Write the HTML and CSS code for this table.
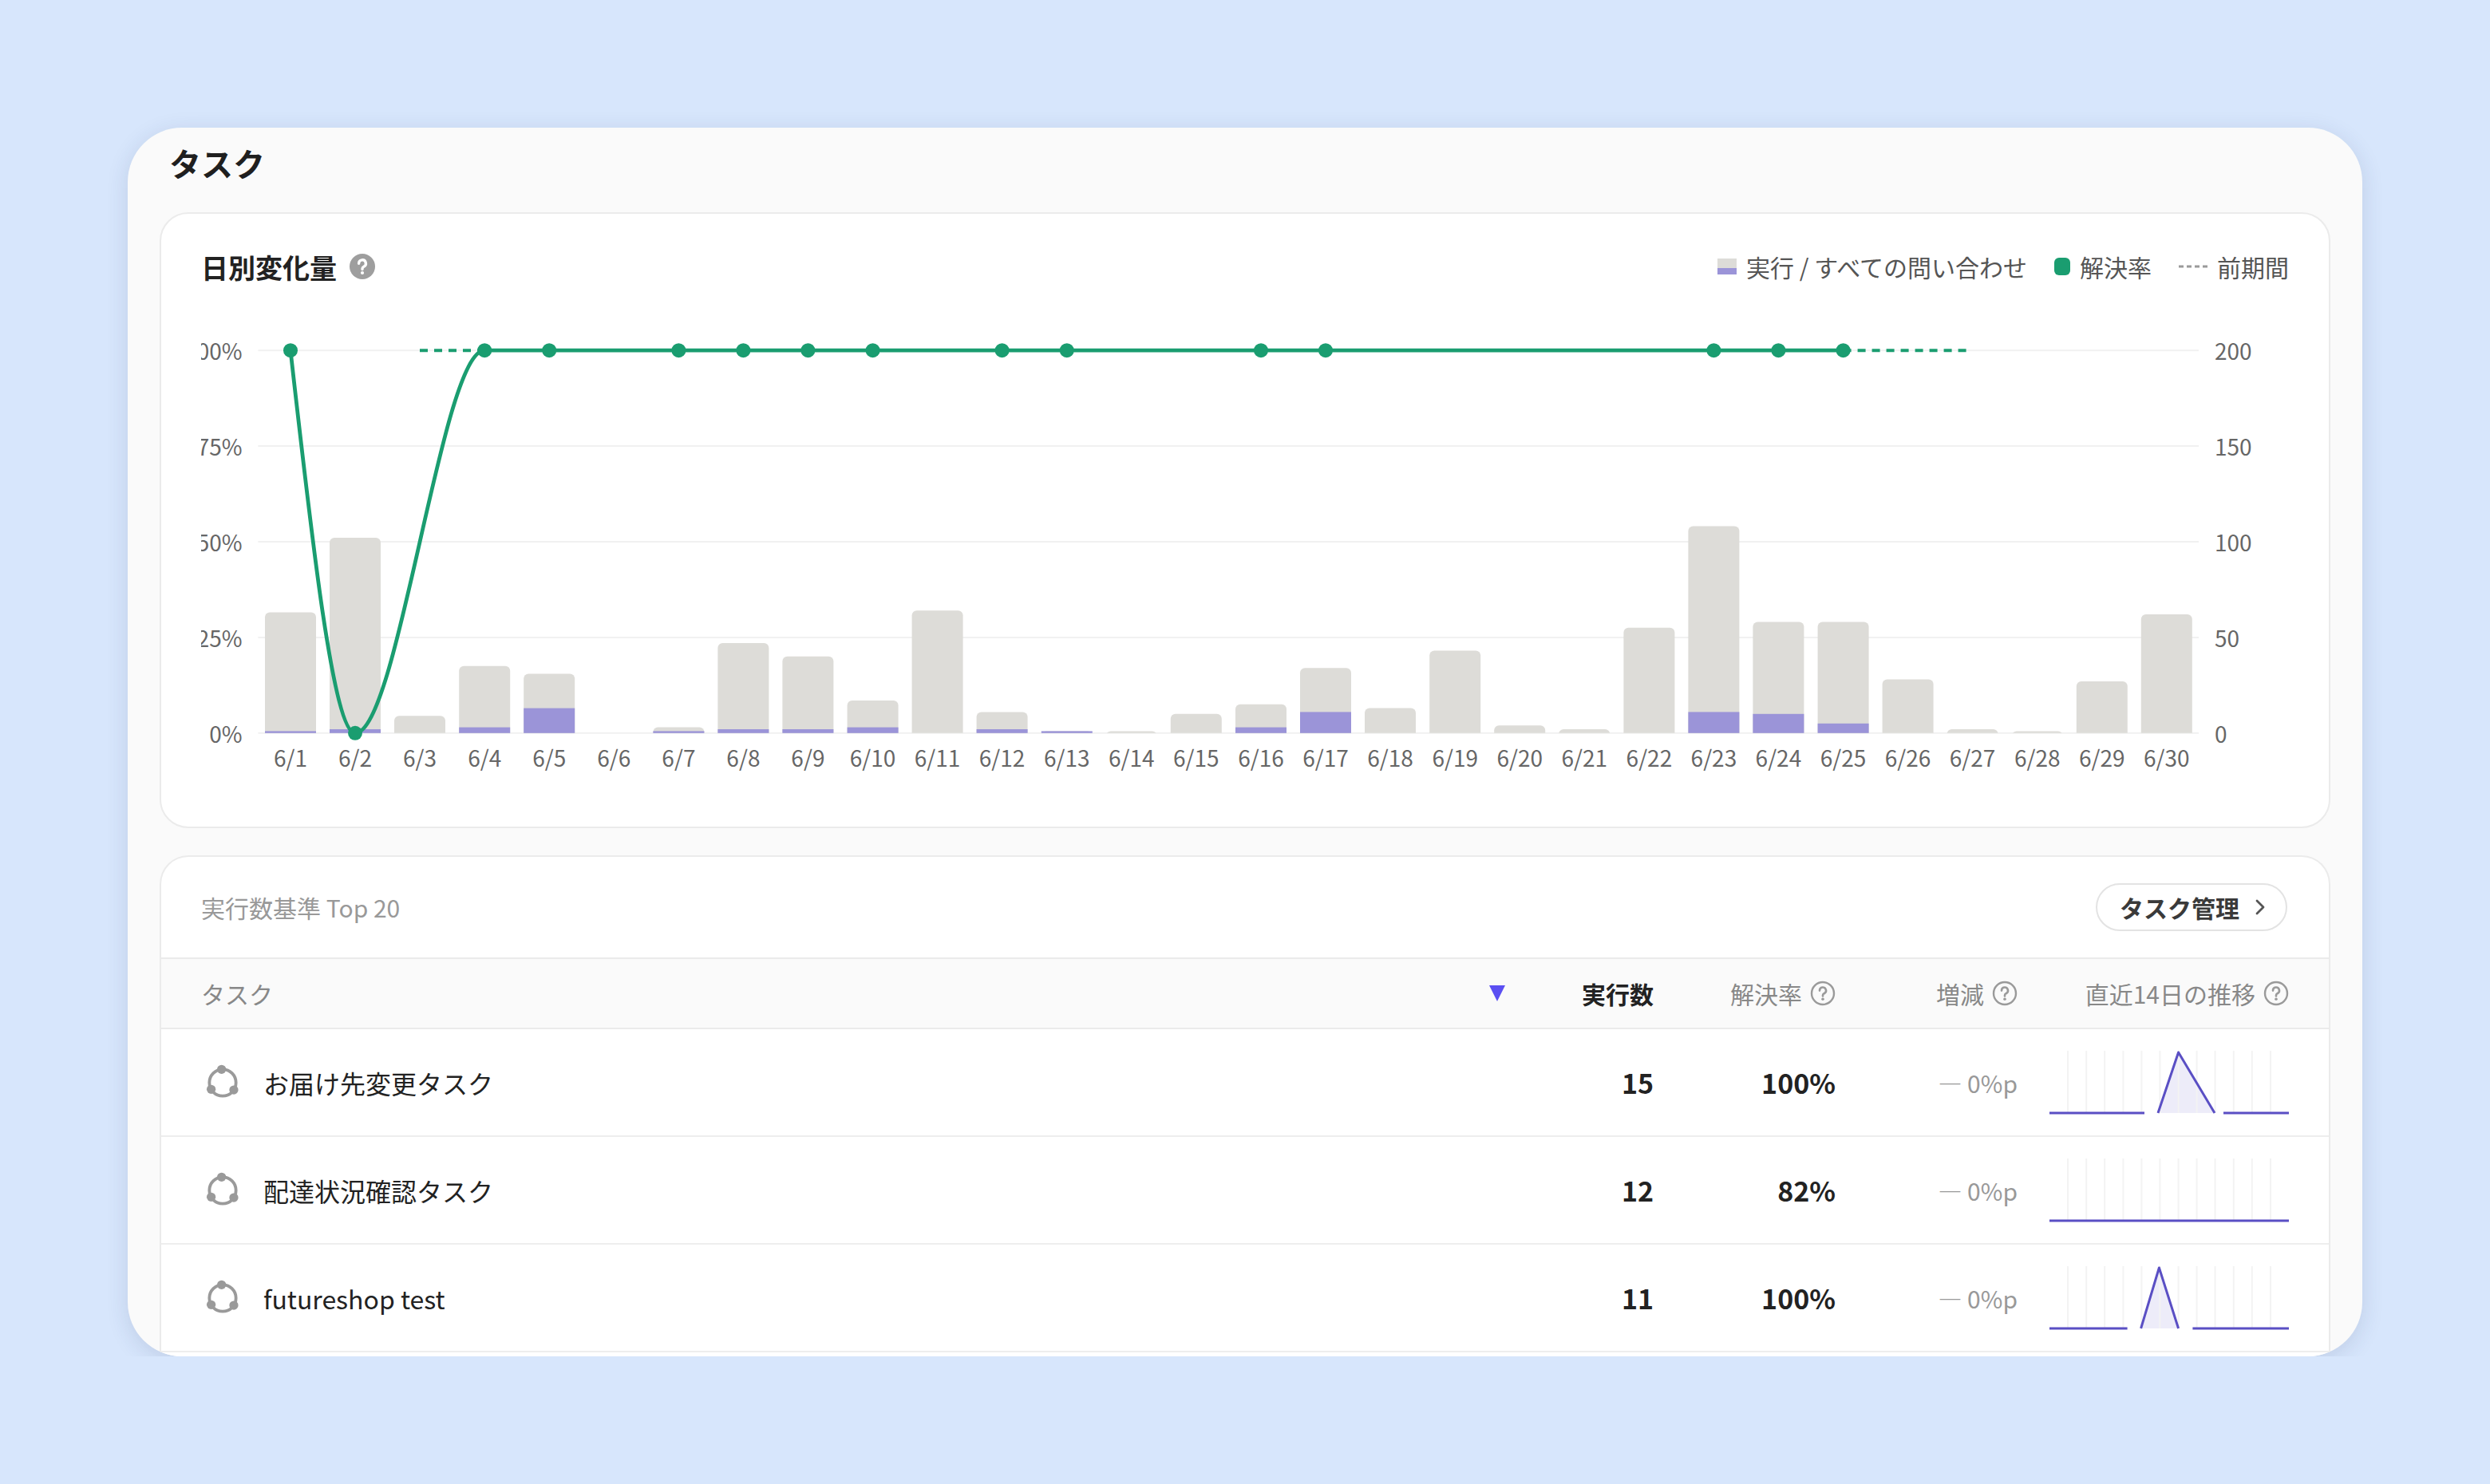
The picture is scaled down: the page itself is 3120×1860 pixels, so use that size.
FILE: index.html
```html
<!DOCTYPE html>
<html lang="ja">
<head>
<meta charset="utf-8">
<title>タスク</title>
<link rel="stylesheet" href="styles.css">
</head>
<body>
<div class="frame">
  <div class="panel">
    <h1 class="panel-title">タスク</h1>

    <section class="card chart-card">
      <div class="chart-head">
        <div class="chart-title">日別変化量
          <svg class="help-fill" viewBox="0 0 16 16" width="16" height="16"><circle cx="8" cy="8" r="8" fill="#9e9e9e"/><path d="M5.8 6.1a2.2 2.2 0 1 1 3.1 2c-.6.3-.9.7-.9 1.3v.4" stroke="#fff" stroke-width="1.7" fill="none" stroke-linecap="round"/><circle cx="8" cy="12" r="1.05" fill="#fff"/></svg>
        </div>
        <div class="legend">
          <span class="lg-item"><span class="lg-bar"></span>実行 / すべての問い合わせ</span>
          <span class="lg-item"><span class="lg-dot"></span>解決率</span>
          <span class="lg-item"><svg class="lg-dash" width="18" height="4" viewBox="0 0 18 4"><line x1="0" y1="2" x2="18" y2="2" stroke="#9a9a9a" stroke-width="1.5" stroke-dasharray="3 2"/></svg>前期間</span>
        </div>
      </div>

      <svg class="chart" width="1307" height="300" viewBox="0 0 1307 300">
        <defs><clipPath id="plot"><rect x="0" y="0" width="1307" height="264.4"/></clipPath></defs>
        <g class="grid">
          <line x1="35.7" x2="1251.5" y1="24.6" y2="24.6"/>
          <line x1="35.7" x2="1251.5" y1="84.55" y2="84.55"/>
          <line x1="35.7" x2="1251.5" y1="144.5" y2="144.5"/>
          <line x1="35.7" x2="1251.5" y1="204.45" y2="204.45"/>
          <line x1="35.7" x2="1251.5" y1="264.4" y2="264.4"/>
        </g>
        <g class="axis" text-anchor="end">
          <text x="25.8" y="24.6">100%</text>
          <text x="25.8" y="84.55">75%</text>
          <text x="25.8" y="144.5">50%</text>
          <text x="25.8" y="204.45">25%</text>
          <text x="25.8" y="264.4">0%</text>
        </g>
        <g class="axis" text-anchor="start">
          <text x="1261.5" y="24.6">200</text>
          <text x="1261.5" y="84.55">150</text>
          <text x="1261.5" y="144.5">100</text>
          <text x="1261.5" y="204.45">50</text>
          <text x="1261.5" y="264.4">0</text>
        </g>
        <g class="bars" clip-path="url(#plot)">
          <rect x="40" y="188.8" width="32" height="80" rx="3"/>
          <rect x="80.5" y="142" width="32" height="127" rx="3"/>
          <rect x="121" y="253.6" width="32" height="15" rx="3"/>
          <rect x="161.6" y="222.4" width="32" height="46" rx="3"/>
          <rect x="202.1" y="227.2" width="32" height="41" rx="3"/>
          <rect x="283.2" y="260.8" width="32" height="8" rx="3"/>
          <rect x="323.7" y="208" width="32" height="60" rx="3"/>
          <rect x="364.2" y="216.4" width="32" height="52" rx="3"/>
          <rect x="404.8" y="244" width="32" height="25" rx="3"/>
          <rect x="445.3" y="187.6" width="32" height="81" rx="3"/>
          <rect x="485.8" y="251.2" width="32" height="18" rx="3"/>
          <rect x="526.4" y="263.2" width="32" height="6" rx="3"/>
          <rect x="566.9" y="263.2" width="32" height="6" rx="3"/>
          <rect x="607.4" y="252.4" width="32" height="16" rx="3"/>
          <rect x="648" y="246.4" width="32" height="22" rx="3"/>
          <rect x="688.5" y="223.6" width="32" height="45" rx="3"/>
          <rect x="729" y="248.8" width="32" height="20" rx="3"/>
          <rect x="769.6" y="212.8" width="32" height="56" rx="3"/>
          <rect x="810.1" y="259.6" width="32" height="9" rx="3"/>
          <rect x="850.6" y="262" width="32" height="7" rx="3"/>
          <rect x="891.2" y="198.4" width="32" height="70" rx="3"/>
          <rect x="931.7" y="134.8" width="32" height="134" rx="3"/>
          <rect x="972.2" y="194.8" width="32" height="74" rx="3"/>
          <rect x="1012.8" y="194.8" width="32" height="74" rx="3"/>
          <rect x="1053.3" y="230.8" width="32" height="38" rx="3"/>
          <rect x="1093.8" y="262" width="32" height="7" rx="3"/>
          <rect x="1134.4" y="263.2" width="32" height="6" rx="3"/>
          <rect x="1174.9" y="232" width="32" height="37" rx="3"/>
          <rect x="1215.4" y="190" width="32" height="79" rx="3"/>
        </g>
        <g class="exec">
          <rect x="40" y="263.2" width="32" height="1.2"/>
          <rect x="80.5" y="262" width="32" height="2.4"/>
          <rect x="161.6" y="260.8" width="32" height="3.6"/>
          <rect x="202.1" y="248.8" width="32" height="15.6"/>
          <rect x="283.2" y="263.2" width="32" height="1.2"/>
          <rect x="323.7" y="262" width="32" height="2.4"/>
          <rect x="364.2" y="262" width="32" height="2.4"/>
          <rect x="404.8" y="260.8" width="32" height="3.6"/>
          <rect x="485.8" y="262" width="32" height="2.4"/>
          <rect x="526.4" y="263.2" width="32" height="1.2"/>
          <rect x="648" y="260.8" width="32" height="3.6"/>
          <rect x="688.5" y="251.2" width="32" height="13.2"/>
          <rect x="931.7" y="251.2" width="32" height="13.2"/>
          <rect x="972.2" y="252.4" width="32" height="12"/>
          <rect x="1012.8" y="258.4" width="32" height="6"/>
        </g>
        <g class="axis" text-anchor="middle">
          <text x="56" y="279.3">6/1</text>
          <text x="96.5" y="279.3">6/2</text>
          <text x="137" y="279.3">6/3</text>
          <text x="177.6" y="279.3">6/4</text>
          <text x="218.1" y="279.3">6/5</text>
          <text x="258.6" y="279.3">6/6</text>
          <text x="299.2" y="279.3">6/7</text>
          <text x="339.7" y="279.3">6/8</text>
          <text x="380.2" y="279.3">6/9</text>
          <text x="420.8" y="279.3">6/10</text>
          <text x="461.3" y="279.3">6/11</text>
          <text x="501.8" y="279.3">6/12</text>
          <text x="542.4" y="279.3">6/13</text>
          <text x="582.9" y="279.3">6/14</text>
          <text x="623.4" y="279.3">6/15</text>
          <text x="664" y="279.3">6/16</text>
          <text x="704.5" y="279.3">6/17</text>
          <text x="745" y="279.3">6/18</text>
          <text x="785.6" y="279.3">6/19</text>
          <text x="826.1" y="279.3">6/20</text>
          <text x="866.6" y="279.3">6/21</text>
          <text x="907.2" y="279.3">6/22</text>
          <text x="947.7" y="279.3">6/23</text>
          <text x="988.2" y="279.3">6/24</text>
          <text x="1028.8" y="279.3">6/25</text>
          <text x="1069.3" y="279.3">6/26</text>
          <text x="1109.8" y="279.3">6/27</text>
          <text x="1150.4" y="279.3">6/28</text>
          <text x="1190.9" y="279.3">6/29</text>
          <text x="1231.4" y="279.3">6/30</text>
        </g>
        <g class="prev">
          <line x1="137" y1="24.6" x2="177.6" y2="24.6"/>
          <line x1="1028.8" y1="24.6" x2="1109.8" y2="24.6"/>
        </g>
        <path class="rate" d="M56,24.6 C69.5,144.5 83,264.4 96.5,264.4 C123.5,264.4 150.6,24.6 177.6,24.6 L1028.8,24.6"/>
        <g class="dots">
          <circle cx="56" cy="24.6" r="4.5"/>
          <circle cx="96.5" cy="264.4" r="4.5"/>
          <circle cx="177.6" cy="24.6" r="4.5"/>
          <circle cx="218.1" cy="24.6" r="4.5"/>
          <circle cx="299.2" cy="24.6" r="4.5"/>
          <circle cx="339.7" cy="24.6" r="4.5"/>
          <circle cx="380.2" cy="24.6" r="4.5"/>
          <circle cx="420.8" cy="24.6" r="4.5"/>
          <circle cx="501.8" cy="24.6" r="4.5"/>
          <circle cx="542.4" cy="24.6" r="4.5"/>
          <circle cx="664" cy="24.6" r="4.5"/>
          <circle cx="704.5" cy="24.6" r="4.5"/>
          <circle cx="947.7" cy="24.6" r="4.5"/>
          <circle cx="988.2" cy="24.6" r="4.5"/>
          <circle cx="1028.8" cy="24.6" r="4.5"/>
        </g>
      </svg>
    </section>

    <section class="card table-card">
      <div class="table-top">
        <span class="subtitle">実行数基準 Top 20</span>
        <a class="btn">タスク管理<svg width="6" height="10" viewBox="0 0 6 10"><path d="M1 1l4 4-4 4" fill="none" stroke="#555" stroke-width="1.4" stroke-linecap="round" stroke-linejoin="round"/></svg></a>
      </div>

      <div class="trow thead">
        <div class="c-name">タスク<span class="sort-tri"></span></div>
        <div class="c-num sorted">実行数</div>
        <div class="c-num">解決率<svg class="help-line" viewBox="0 0 16 16" width="16" height="16"><circle cx="8" cy="8" r="7" fill="none" stroke="#9a9a9a" stroke-width="1.2"/><path d="M6 6.3a2 2 0 1 1 2.8 1.8c-.5.3-.8.6-.8 1.2v.4" stroke="#9a9a9a" stroke-width="1.3" fill="none" stroke-linecap="round"/><circle cx="8" cy="11.6" r=".9" fill="#9a9a9a"/></svg></div>
        <div class="c-num">増減<svg class="help-line" viewBox="0 0 16 16" width="16" height="16"><circle cx="8" cy="8" r="7" fill="none" stroke="#9a9a9a" stroke-width="1.2"/><path d="M6 6.3a2 2 0 1 1 2.8 1.8c-.5.3-.8.6-.8 1.2v.4" stroke="#9a9a9a" stroke-width="1.3" fill="none" stroke-linecap="round"/><circle cx="8" cy="11.6" r=".9" fill="#9a9a9a"/></svg></div>
        <div class="c-num">直近14日の推移<svg class="help-line" viewBox="0 0 16 16" width="16" height="16"><circle cx="8" cy="8" r="7" fill="none" stroke="#9a9a9a" stroke-width="1.2"/><path d="M6 6.3a2 2 0 1 1 2.8 1.8c-.5.3-.8.6-.8 1.2v.4" stroke="#9a9a9a" stroke-width="1.3" fill="none" stroke-linecap="round"/><circle cx="8" cy="11.6" r=".9" fill="#9a9a9a"/></svg></div>
      </div>

      <div class="trow row">
        <div class="c-name"><svg class="task-ico" viewBox="0 0 24 24" width="27" height="27"><circle cx="12" cy="12" r="7.4" fill="none" stroke="#9a9a9a" stroke-width="1.7"/><circle cx="11.4" cy="4.6" r="2.5" fill="#9a9a9a"/><circle cx="5.6" cy="15.7" r="2.5" fill="#9a9a9a"/><circle cx="18.2" cy="16" r="2.5" fill="#9a9a9a"/></svg>お届け先変更タスク</div>
        <div class="c-num val">15</div>
        <div class="c-num val">100%</div>
        <div class="c-num delta">— 0%p</div>
        <div class="c-num">
          <svg class="spark" width="150" height="40" viewBox="0 0 150 40">
            <path class="sfill" d="M68,39 L80.8,1 L103.5,39 Z"/>
            <g class="sgrid"><line x1="11.5" x2="11.5" y1="0" y2="39"/><line x1="23.1" x2="23.1" y1="0" y2="39"/><line x1="34.6" x2="34.6" y1="0" y2="39"/><line x1="46.2" x2="46.2" y1="0" y2="39"/><line x1="57.7" x2="57.7" y1="0" y2="39"/><line x1="69.2" x2="69.2" y1="0" y2="39"/><line x1="80.8" x2="80.8" y1="0" y2="39"/><line x1="92.3" x2="92.3" y1="0" y2="39"/><line x1="103.8" x2="103.8" y1="0" y2="39"/><line x1="115.4" x2="115.4" y1="0" y2="39"/><line x1="126.9" x2="126.9" y1="0" y2="39"/><line x1="138.5" x2="138.5" y1="0" y2="39"/></g>
            <path class="sline" d="M0,39 H59.5 M68,39 L80.8,1 L103.5,39 M109,39 H150"/>
          </svg>
        </div>
      </div>

      <div class="trow row">
        <div class="c-name"><svg class="task-ico" viewBox="0 0 24 24" width="27" height="27"><circle cx="12" cy="12" r="7.4" fill="none" stroke="#9a9a9a" stroke-width="1.7"/><circle cx="11.4" cy="4.6" r="2.5" fill="#9a9a9a"/><circle cx="5.6" cy="15.7" r="2.5" fill="#9a9a9a"/><circle cx="18.2" cy="16" r="2.5" fill="#9a9a9a"/></svg>配達状況確認タスク</div>
        <div class="c-num val">12</div>
        <div class="c-num val">82%</div>
        <div class="c-num delta">— 0%p</div>
        <div class="c-num">
          <svg class="spark" width="150" height="40" viewBox="0 0 150 40">
            <g class="sgrid"><line x1="11.5" x2="11.5" y1="0" y2="39"/><line x1="23.1" x2="23.1" y1="0" y2="39"/><line x1="34.6" x2="34.6" y1="0" y2="39"/><line x1="46.2" x2="46.2" y1="0" y2="39"/><line x1="57.7" x2="57.7" y1="0" y2="39"/><line x1="69.2" x2="69.2" y1="0" y2="39"/><line x1="80.8" x2="80.8" y1="0" y2="39"/><line x1="92.3" x2="92.3" y1="0" y2="39"/><line x1="103.8" x2="103.8" y1="0" y2="39"/><line x1="115.4" x2="115.4" y1="0" y2="39"/><line x1="126.9" x2="126.9" y1="0" y2="39"/><line x1="138.5" x2="138.5" y1="0" y2="39"/></g>
            <path class="sline" d="M0,39 H150"/>
          </svg>
        </div>
      </div>

      <div class="trow row">
        <div class="c-name"><svg class="task-ico" viewBox="0 0 24 24" width="27" height="27"><circle cx="12" cy="12" r="7.4" fill="none" stroke="#9a9a9a" stroke-width="1.7"/><circle cx="11.4" cy="4.6" r="2.5" fill="#9a9a9a"/><circle cx="5.6" cy="15.7" r="2.5" fill="#9a9a9a"/><circle cx="18.2" cy="16" r="2.5" fill="#9a9a9a"/></svg>futureshop test</div>
        <div class="c-num val">11</div>
        <div class="c-num val">100%</div>
        <div class="c-num delta">— 0%p</div>
        <div class="c-num">
          <svg class="spark" width="150" height="40" viewBox="0 0 150 40">
            <path class="sfill" d="M57.3,39 L68.7,1 L80.8,39 Z"/>
            <g class="sgrid"><line x1="11.5" x2="11.5" y1="0" y2="39"/><line x1="23.1" x2="23.1" y1="0" y2="39"/><line x1="34.6" x2="34.6" y1="0" y2="39"/><line x1="46.2" x2="46.2" y1="0" y2="39"/><line x1="57.7" x2="57.7" y1="0" y2="39"/><line x1="69.2" x2="69.2" y1="0" y2="39"/><line x1="80.8" x2="80.8" y1="0" y2="39"/><line x1="92.3" x2="92.3" y1="0" y2="39"/><line x1="103.8" x2="103.8" y1="0" y2="39"/><line x1="115.4" x2="115.4" y1="0" y2="39"/><line x1="126.9" x2="126.9" y1="0" y2="39"/><line x1="138.5" x2="138.5" y1="0" y2="39"/></g>
            <path class="sline" d="M0,39 H48.8 M57.3,39 L68.7,1 L80.8,39 M89.7,39 H150"/>
          </svg>
        </div>
      </div>
    </section>
  </div>
</div>
</body>
</html>
```

FILE: styles.css
```css
html {
  zoom: 2;
}

body {
  margin: 0;
  background: #d7e6fc;
  font-family: "Noto Sans CJK JP", "Noto Sans", "Liberation Sans", sans-serif;
  color: #222;
}

.frame {
  padding: 80px 80px 0;
}

.panel {
  width: 1400px;
  height: 770px;
  box-sizing: border-box;
  padding: 0 20px;
  background: #fafafa;
  border-radius: 34px;
  overflow: hidden;
  box-shadow: 0 3px 14px rgba(40, 60, 100, 0.14);
}

.panel-title {
  margin: 0 0 17px;
  padding: 8px 6px 0;
  font-size: 20px;
  line-height: 28px;
  font-weight: 700;
  color: #1f1f1f;
}

.card {
  background: #fff;
  border: 1px solid #ebebeb;
  border-radius: 18px;
}

.chart-card {
  height: 386px;
  box-sizing: border-box;
  padding: 21px 25px 23px;
}

.chart-head {
  display: flex;
  align-items: center;
  justify-content: space-between;
  height: 24px;
}

.chart-title {
  display: flex;
  align-items: center;
  gap: 8px;
  font-size: 17px;
  font-weight: 700;
  color: #222;
}

.help-fill {
  display: block;
}

.legend {
  display: flex;
  align-items: center;
  gap: 17px;
  font-size: 15px;
  color: #555;
}

.lg-item {
  display: inline-flex;
  align-items: center;
  gap: 6px;
}

.lg-bar {
  width: 12px;
  height: 10px;
  background: linear-gradient(#dddcd8 0 62%, #9b94d8 62% 100%);
}

.lg-dot {
  width: 10px;
  height: 11px;
  border-radius: 3px;
  background: #1a9d70;
}

.lg-dash {
  display: block;
}

.chart {
  display: block;
  margin-top: 16px;
  overflow: hidden;
}

.grid line {
  stroke: #f1f1f1;
  stroke-width: 1;
}

.axis text {
  font-family: "Noto Sans CJK JP", "Noto Sans", sans-serif;
  font-size: 14px;
  fill: #666;
  dominant-baseline: central;
}

.bars rect {
  fill: #dddcd8;
}

.exec rect {
  fill: #9b94d8;
}

.rate {
  fill: none;
  stroke: #1a9d70;
  stroke-width: 2.4;
  stroke-linejoin: round;
}

.prev line {
  stroke: #1a9d70;
  stroke-width: 2;
  stroke-dasharray: 5 4;
}

.dots circle {
  fill: #1a9d70;
}

.table-card {
  margin-top: 17px;
  border-bottom: none;
  border-radius: 18px 18px 0 0;
  height: 400px;
}

.table-top {
  display: flex;
  align-items: center;
  justify-content: space-between;
  height: 63px;
  padding: 0 26px 0 25px;
}

.subtitle {
  font-size: 15px;
  color: #999;
}

.btn {
  display: inline-flex;
  align-items: center;
  gap: 10px;
  height: 30px;
  box-sizing: border-box;
  padding: 0 13px 0 14px;
  border: 1px solid #e3e3e3;
  border-radius: 15px;
  background: #fff;
  font-size: 15px;
  font-weight: 700;
  color: #3a3a3a;
}

.trow {
  display: grid;
  grid-template-columns: 1fr 80px 114px 114px 170px;
  align-items: center;
  padding: 0 25px;
  box-sizing: border-box;
}

.thead {
  height: 45px;
  background: #fafafa;
  border-top: 1px solid #ebebeb;
  border-bottom: 1px solid #ebebeb;
  font-size: 15px;
  color: #888;
}

.row {
  height: 67.5px;
  border-bottom: 1px solid #eeeeee;
}

.c-name {
  display: flex;
  align-items: center;
}

.thead .c-name {
  padding-right: 13px;
}

.sort-tri {
  margin-left: auto;
  width: 0;
  height: 0;
  border-left: 5px solid transparent;
  border-right: 5px solid transparent;
  border-top: 10px solid #5b4ff2;
}

.c-num {
  display: flex;
  align-items: center;
  justify-content: flex-end;
  gap: 5px;
}

.sorted {
  font-weight: 700;
  color: #222;
}

.help-line {
  display: block;
}

.row .c-name {
  font-size: 16px;
  color: #222;
  gap: 12px;
}

.task-ico {
  display: block;
}

.val {
  font-size: 17px;
  font-weight: 700;
  color: #222;
}

.delta {
  font-size: 15px;
  color: #999;
}

.spark {
  display: block;
}

.sgrid line {
  stroke: #f3f3f3;
  stroke-width: 1;
}

.sfill {
  fill: #e9e7f7;
  opacity: 0.8;
}

.sline {
  fill: none;
  stroke: #5a4fc4;
  stroke-width: 1.5;
  stroke-linejoin: round;
}
```
